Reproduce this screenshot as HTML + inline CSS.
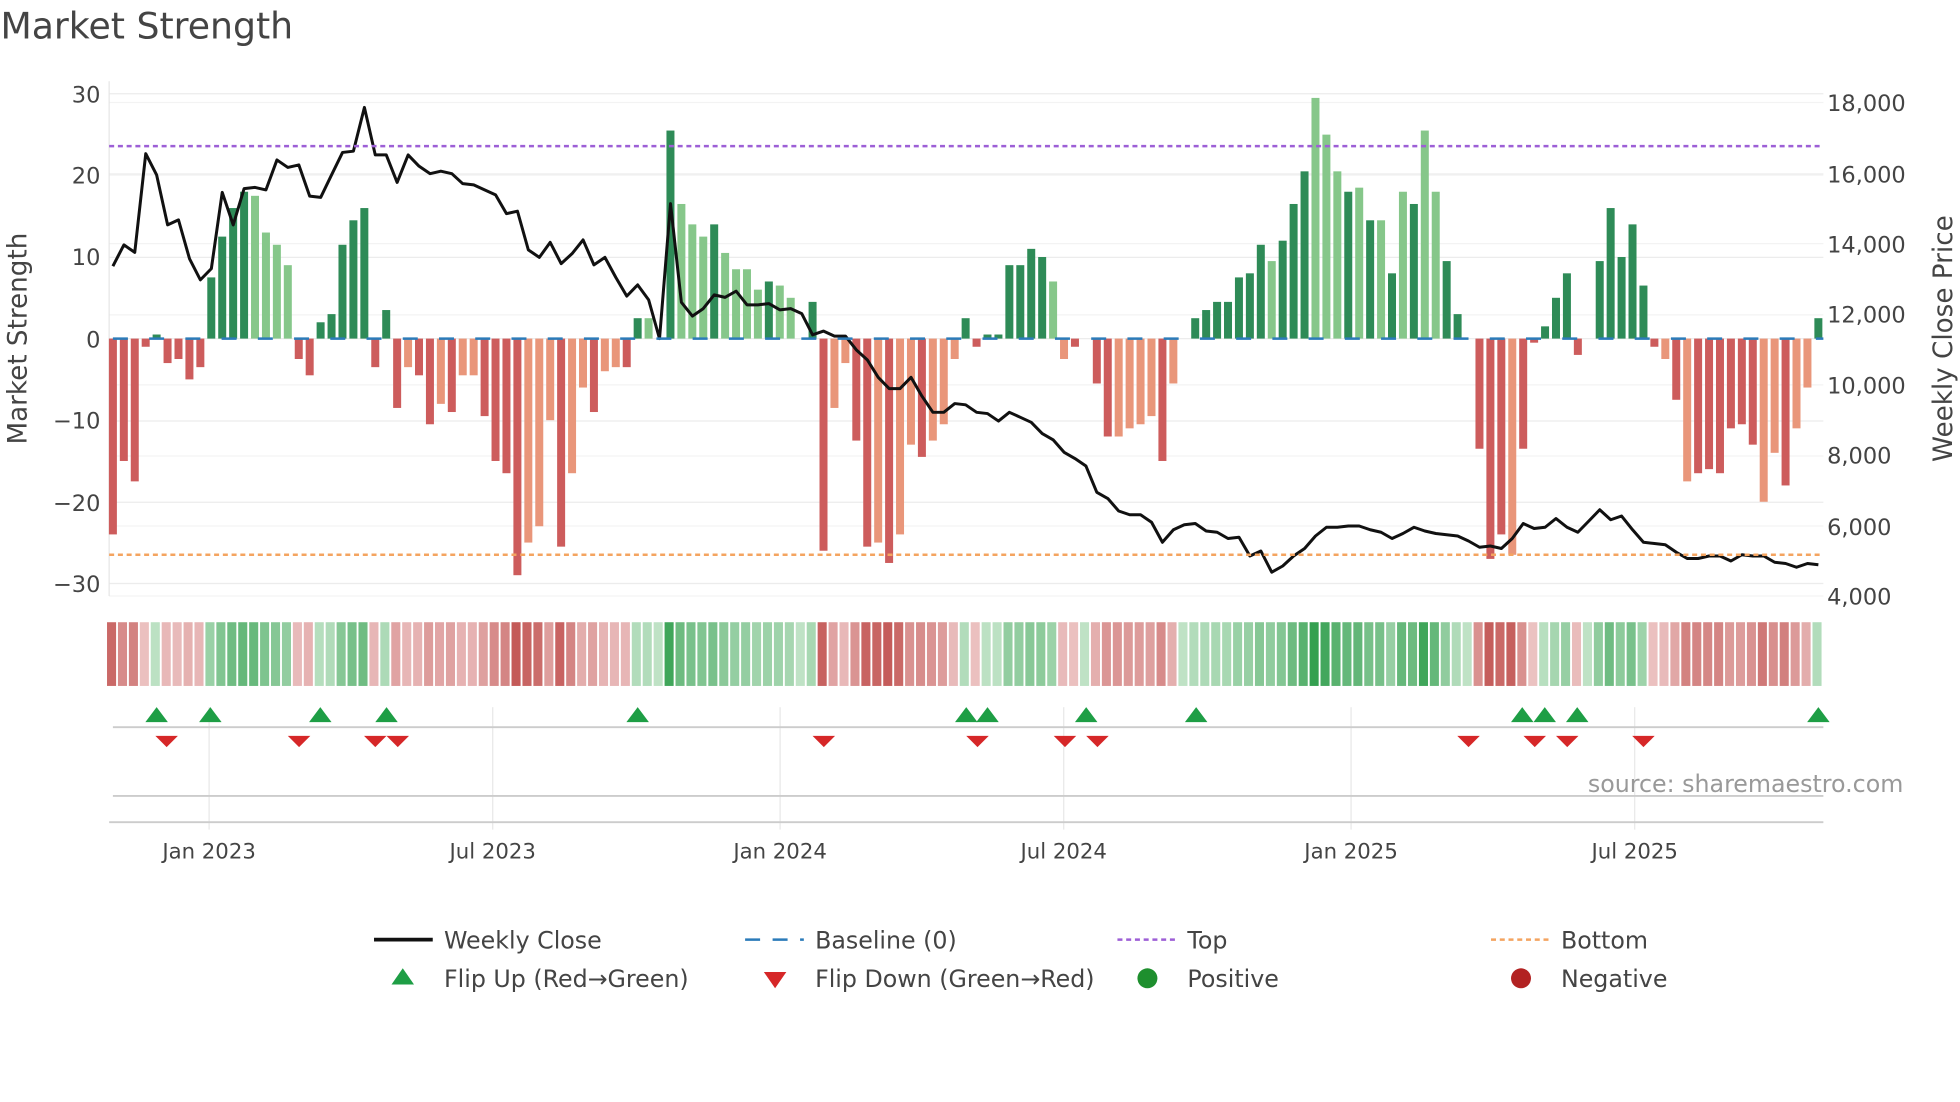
<!DOCTYPE html>
<html><head><meta charset="utf-8"><style>
html,body{margin:0;padding:0;background:#fff;width:1960px;height:1102px;overflow:hidden}
svg{display:block}
text{font-family:"DejaVu Sans","Liberation Sans",sans-serif;fill:#444}
</style></head><body>
<svg id="s" width="1960" height="1102" viewBox="0 0 1568 882" xmlns="http://www.w3.org/2000/svg">
<text x="0" y="31" font-size="29" fill="#444">Market Strength</text>
<g id="grid"></g>
<g id="bars"></g>
<g id="heat"></g>
<g id="marks"></g>
<polyline id="line" fill="none" stroke="#111" stroke-width="2.4" stroke-linejoin="round"/>
<line x1="87" y1="117" x2="1459" y2="117" stroke="#9d5fd6" stroke-width="2" stroke-dasharray="4,3"/>
<line x1="87" y1="444" x2="1459" y2="444" stroke="#f4a460" stroke-width="2" stroke-dasharray="4,3"/>
<line x1="90" y1="271" x2="1459" y2="271" stroke="#2b7bb9" stroke-width="2" stroke-dasharray="12,17"/>
<g font-size="18" text-anchor="end">
<text x="80" y="82">30</text><text x="80" y="147">20</text><text x="80" y="212">10</text><text x="80" y="278">0</text>
<text x="80" y="343">−10</text><text x="80" y="409">−20</text><text x="80" y="474">−30</text>
</g>
<g font-size="18">
<text x="1462" y="89">18,000</text><text x="1462" y="146">16,000</text><text x="1462" y="202">14,000</text><text x="1462" y="258">12,000</text>
<text x="1462" y="315">10,000</text><text x="1462" y="371">8,000</text><text x="1462" y="428">6,000</text><text x="1462" y="484">4,000</text>
</g>
<text transform="translate(21,271) rotate(-90)" font-size="21" text-anchor="middle">Market Strength</text>
<text transform="translate(1562,271) rotate(-90)" font-size="21" text-anchor="middle">Weekly Close Price</text>
<line x1="90" y1="582" x2="1459" y2="582" stroke="#ccc" stroke-width="1.5"/>
<line x1="90" y1="637" x2="1459" y2="637" stroke="#ccc" stroke-width="1.5"/>
<line x1="87" y1="658" x2="1459" y2="658" stroke="#ccc" stroke-width="1.5"/>
<g font-size="17" text-anchor="middle">
<text x="167" y="687">Jan 2023</text><text x="394" y="687">Jul 2023</text><text x="624" y="687">Jan 2024</text>
<text x="851" y="687">Jul 2024</text><text x="1081" y="687">Jan 2025</text><text x="1308" y="687">Jul 2025</text>
</g>
<text x="1523" y="634" font-size="19" text-anchor="end" style="fill:#999">source: sharemaestro.com</text>
<g font-size="19">
<line x1="299" y1="752" x2="346" y2="752" stroke="#111" stroke-width="3"/><text x="355" y="759">Weekly Close</text>
<line x1="596" y1="752" x2="643" y2="752" stroke="#2b7bb9" stroke-width="2" stroke-dasharray="12,10"/><text x="652" y="759">Baseline (0)</text>
<line x1="894" y1="752" x2="941" y2="752" stroke="#9d5fd6" stroke-width="2" stroke-dasharray="4,3"/><text x="950" y="759">Top</text>
<line x1="1193" y1="752" x2="1240" y2="752" stroke="#f4a460" stroke-width="2" stroke-dasharray="4,3"/><text x="1249" y="759">Bottom</text>
<polygon points="313,788 331,788 322,775" fill="#1e9e45"/><text x="355" y="790">Flip Up (Red→Green)</text>
<polygon points="611,778 629,778 620,791" fill="#d62728"/><text x="652" y="790">Flip Down (Green→Red)</text>
<circle cx="918" cy="783" r="8" fill="#1e8f2e"/><text x="950" y="790">Positive</text>
<circle cx="1217" cy="783" r="8" fill="#b22222"/><text x="1249" y="790">Negative</text>
</g>
</svg>
<script>
var NS="http://www.w3.org/2000/svg";
function el(p,t,a){var e=document.createElementNS(NS,t);for(var k in a)e.setAttribute(k,a[k]);document.getElementById(p).appendChild(e);return e;}
[75,140,206,271,337,402,467].forEach(function(y){el("grid","line",{x1:87,x2:1459,y1:y,y2:y,stroke:"#ececec","stroke-width":1});});
[82,139,195,252,308,365,421,477].forEach(function(y){el("grid","line",{x1:87,x2:1459,y1:y,y2:y,stroke:"#f3f3f3","stroke-width":1});});
el("grid","line",{x1:87,x2:87,y1:65,y2:477,stroke:"#e6e6e6"});
[167,394,624,851,1081,1308].forEach(function(x){el("grid","line",{x1:x,x2:x,y1:566,y2:664,stroke:"#e8e8e8"});});
var V=[-24,-15,-17.5,-1,0.5,-3,-2.5,-5,-3.5,7.5,12.5,16,18,17.5,13,11.5,9,-2.5,-4.5,2,3,11.5,14.5,16,-3.5,3.5,-8.5,-3.5,-4.5,-10.5,-8,-9,-4.5,-4.5,-9.5,-15,-16.5,-29,-25,-23,-10,-25.5,-16.5,-6,-9,-4,-3.5,-3.5,2.5,2.5,0,25.5,16.5,14,12.5,14,10.5,8.5,8.5,6,7,6.5,5,0,4.5,-26,-8.5,-3,-12.5,-25.5,-25,-27.5,-24,-13,-14.5,-12.5,-10.5,-2.5,2.5,-1,0.5,0.5,9,9,11,10,7,-2.5,-1,0,-5.5,-12,-12,-11,-10.5,-9.5,-15,-5.5,0,2.5,3.5,4.5,4.5,7.5,8,11.5,9.5,12,16.5,20.5,29.5,25,20.5,18,18.5,14.5,14.5,8,18,16.5,25.5,18,9.5,3,0,-13.5,-27,-24,-26.5,-13.5,-0.5,1.5,5,8,-2,0,9.5,16,10,14,6.5,-1,-2.5,-7.5,-17.5,-16.5,-16,-16.5,-11,-10.5,-13,-20,-14,-18,-11,-6,2.5];
var LIGHT={};
[13,14,15,16,27,30,32,33,38,39,40,42,43,45,46,49,52,53,54,56,57,58,59,61,62,66,67,70,72,73,75,76,77,86,87,89,92,93,94,95,97,106,110,111,112,114,116,118,120,121,124,128,142,144,151,152,154,155,157,160].forEach(function(i){LIGHT[i]=1;});
var n=V.length, dx=(1455-90)/(n-1);
function mix(a,b,t){return "rgb("+a.map(function(v,i){return Math.round(v+(b[i]-v)*t);}).join(",")+")";}
for(var i=0;i<n;i++){
 var x=90+i*dx,v=V[i],y0=271,y1=271-v*6.53;
 var c=v>=0?(LIGHT[i]?"#86c78a":"#2e8b57"):(LIGHT[i]?"#e9967a":"#cd5c5c");
 if(Math.abs(v)>0.2) el("bars","rect",{x:x-3.2,width:6.4,y:Math.min(y0,y1),height:Math.abs(y1-y0),fill:c});
 var t=Math.min(1,Math.abs(v)/28);
 var hc=v>=0?mix([215,238,218],[52,160,80],0.15+0.85*t):mix([243,214,214],[196,90,88],0.15+0.85*t);
 el("heat","rect",{x:x-4.7,width:dx-1.5,y:498,height:51,fill:hc});
}
var L=[213,196,202,123,140,180,176,207,224,215,154,180,151,150,152,128,134,132,157,158,140,122,121,86,124,124,146,124,133,139,137,139,147,148,152,156,171,169,200,206,194,211,203,192,212,206,222,237,228,240,271,163,242,253,247,236,238,233,244,244,243,248,247,251,268,265,269,269,280,288,302,311,311,302,317,330,330,323,324,330,331,337,330,334,338,347,352,362,367,373,394,399,409,412,412,418,434,424,420,419,425,426,431,430,445,441,458,453,445,439,429,422,422,421,421,424,426,431,427,422,425,427,428,429,433,438,437,439,431,419,423,422,415,422,426,417,408,416,413,424,434,435,436,442,447,447,445,445,449,444,445,445,450,451,454,451,452];
var pts=[];for(var j=0;j<L.length;j++){var lx=90+j*(1455-90)/(L.length-1);pts.push(lx.toFixed(1)+","+L[j]);}
document.getElementById("line").setAttribute("points",pts.join(" "));
[125,168,256,309,510,773,790,869,957,1218,1236,1262,1455].forEach(function(x){el("marks","polygon",{points:(x-9)+",578 "+(x+9)+",578 "+x+",566",fill:"#1e9e45"});});
[133,239,300,318,659,782,852,878,1175,1228,1254,1315].forEach(function(x){el("marks","polygon",{points:(x-9)+",589 "+(x+9)+",589 "+x+",598",fill:"#d62728"});});
</script>
</body></html>
